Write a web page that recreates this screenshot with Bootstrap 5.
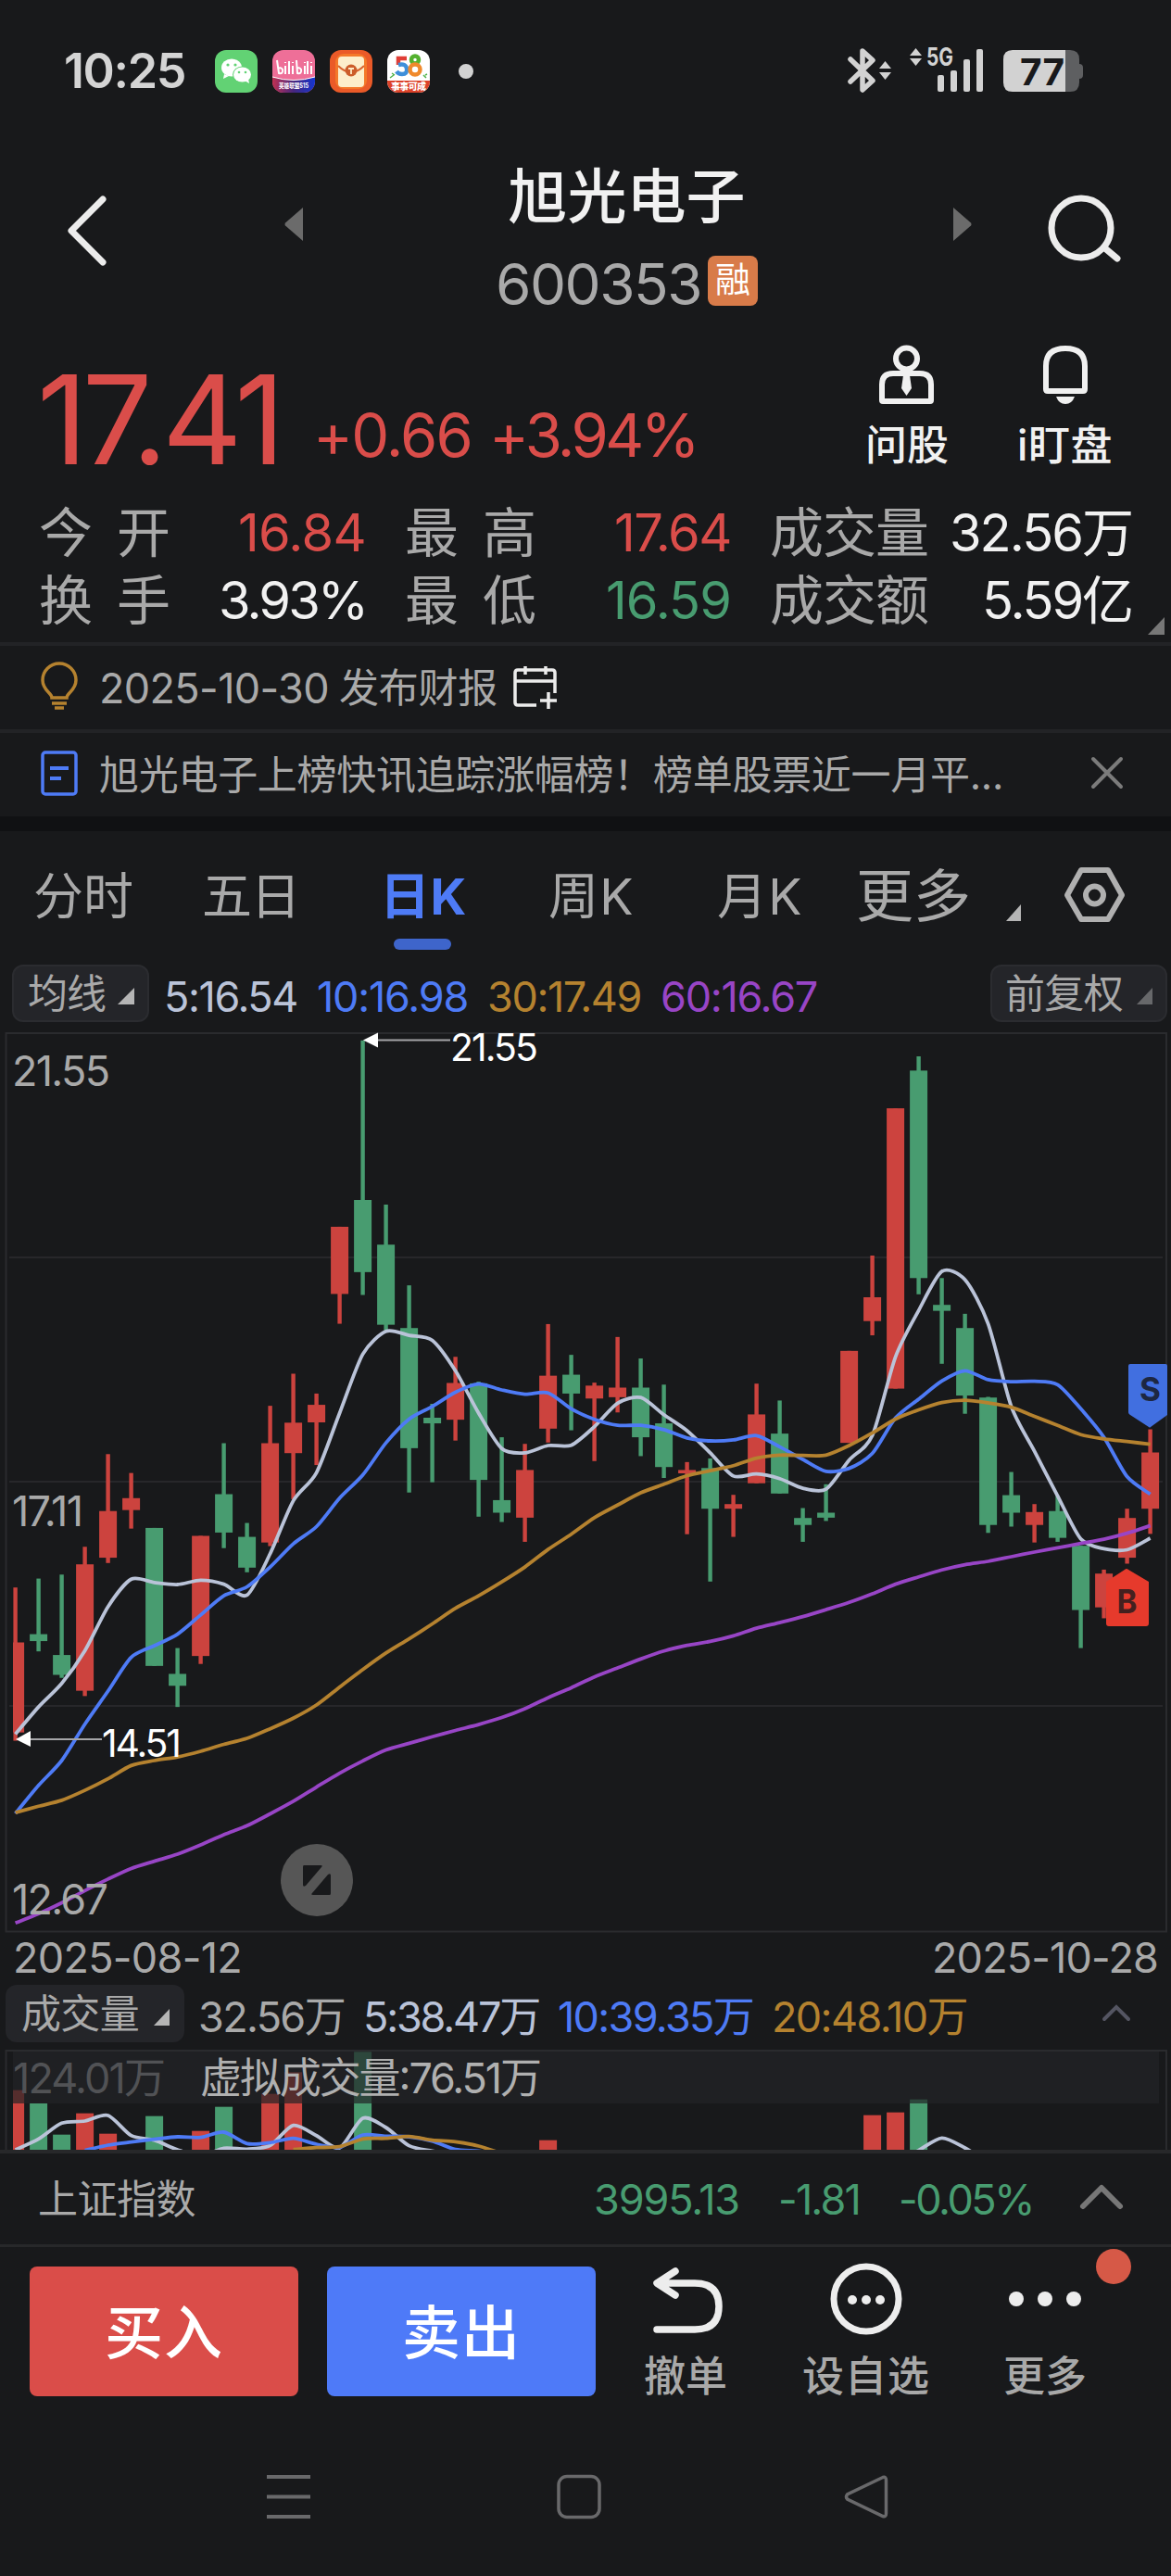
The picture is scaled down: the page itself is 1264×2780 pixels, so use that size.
<!DOCTYPE html>
<html lang="zh-CN" data-bs-theme="dark">
<head>
<meta charset="utf-8">
<meta name="viewport" content="width=device-width, initial-scale=1">
<title>旭光电子 600353</title>
<link href="https://cdn.jsdelivr.net/npm/bootstrap@5.3.0/dist/css/bootstrap.min.css" rel="stylesheet">
<style>
:root{--up:#da4d4a;--down:#489c70;--blue:#4e7bf6;--bar-up:#cc433e;--gold:#b5822f;--violet:#9845c6;--silver:#bac3d8;--dim:#a9a9a9;--bright:#f1f1f1;--edge:#27282b;--pill:#242529}
html,body{background:#18191b}
body{margin:0;font-family:Inter,"Noto Sans CJK SC",sans-serif;color:var(--dim);line-height:1;overflow:hidden}
.screen{width:1264px;height:2780px;overflow:hidden}
.screen span,.screen a{white-space:nowrap}
svg{display:block;flex:none;overflow:visible}
.c-up{color:var(--up)}.c-down{color:var(--down)}.c-blue{color:var(--blue)}.c-gold{color:var(--gold)}.c-violet{color:var(--violet)}.c-silver{color:var(--silver)}.c-bright{color:var(--bright)}
.light{font-weight:400}
.statusbar{height:154px;padding-left:69px}
.statusbar .clock{font-size:52px;font-weight:600;color:#d4d4d4;width:163px}
.statusbar .apps{gap:16px}
.radios{margin-right:96px}
.top{height:198px;display:grid;grid-template-columns:304px 752px 208px}
.stock-name{font-size:64px;font-weight:500;color:var(--bright);height:70px;line-height:70px;margin-top:23px}
.stock-code{font-size:62px;height:58px;line-height:62px;margin-top:29px}
.rz{width:54px;height:54px;border-radius:8px;background:#d87b49;color:#fff;font-size:38px;line-height:50px;text-align:center;margin-left:7px}
.quote{height:174px;padding-left:40px}
.price{font-size:134px;font-weight:400;width:298px;height:100px;line-height:100px;margin-top:50px}
.delta{font-size:65px;height:60px;line-height:60px;margin-top:88px;gap:19px;width:421px}
.qa{font-size:45px;font-weight:500;color:var(--bright);margin-top:20px}
.qa svg{margin-bottom:20px}
.stats{height:167px;padding:12px 42px 0;display:grid;grid-template-columns:353px 352px 391px;column-gap:42px;grid-auto-rows:73px;font-size:56px}
.stats .lbl{font-size:58px;letter-spacing:-1px}
.stats .wide{letter-spacing:26px}
.notice{height:94px;border-top:4px solid #222326;padding-left:42px;font-size:43px}
.gapbar{height:16px;background:#101113}
.tabs{height:144px;display:grid;grid-template-columns:36px 182px 192px 182px 182px 150px 161px 63px auto;font-size:54px;line-height:141px}
.tabs a{color:var(--dim);text-decoration:none}
.tabs .on{color:var(--blue);font-weight:700;position:relative}
.tabs .on::after{content:"";position:absolute;left:15px;top:116px;width:62px;height:12px;border-radius:6px;background:#3e65cb}
.pillbox{background:var(--pill);border:2px solid #2b2c30;border-radius:12px;height:62px;font-size:43px;line-height:46px}
.ma{height:74px;font-size:45px}
.chart{height:971px}
.dates{height:56px;padding:0 14px 4px;font-size:45px}
.volhead{height:70px;font-size:45px}
.volume{height:108px;overflow:hidden}
.index{height:102px;border-top:4px solid #27282a;font-size:45px}
.actions{height:196px;border-top:3px solid #27282a;padding-left:32px}
.trade{width:290px;height:140px;border-radius:8px;margin-top:21px;font-size:63px;font-weight:500;color:#fff;line-height:142px;padding:0;border:0}
.buy,.buy:hover{background:#da4d49}.sell,.sell:hover{background:#4e7af8}
.act{font-size:45px;font-weight:500}
.act svg{margin-bottom:20px}
.sysnav{padding-left:284px;margin-top:48px}
svg text{font-family:Inter,"Noto Sans CJK SC",sans-serif}
</style>
<script src="https://cdn.jsdelivr.net/npm/bootstrap@5.3.0/dist/js/bootstrap.bundle.min.js"></script>
</head>
<body>
<main class="screen d-flex flex-column">

<!-- system status bar -->
<div class="statusbar d-flex align-items-center">
  <span class="clock"><span data-w="131">10:25</span></span>
  <div class="apps d-flex">
    <svg width="46" height="46"><rect width="46" height="46" rx="12" fill="#62d274"/><ellipse cx="18" cy="19" rx="11" ry="9.5" fill="#fff"/><path d="M10 26l-1 5 6-3z" fill="#fff"/><ellipse cx="29.500" cy="26.500" rx="10.500" ry="9" fill="#62d274"/><ellipse cx="29.500" cy="26.500" rx="9.500" ry="8" fill="#fff"/><path d="M32 33l5 3-1-5z" fill="#fff"/><g fill="#62d274"><circle cx="14" cy="16" r="1.600"/><circle cx="22" cy="16" r="1.600"/><circle cx="26" cy="24" r="1.300"/><circle cx="33" cy="24" r="1.300"/></g></svg>
    <svg width="46" height="46"><defs><clipPath id="r1"><rect width="46" height="46" rx="12"/></clipPath><linearGradient id="g1"><stop stop-color="#c03052"/><stop offset=".5" stop-color="#46277f"/><stop offset="1" stop-color="#1435cf"/></linearGradient></defs><g clip-path="url(#r1)"><rect width="46" height="46" fill="#ee6f98"/><path d="M0 29Q23 36 46 29V46H0Z" fill="url(#g1)"/><path d="M0 29Q23 36 46 29" fill="none" stroke="#fff"/><g fill="none" stroke="#fff" stroke-width="2"><path d="M5 11l2 14q5 1 4-4-2-3-5-1M14 17v9M18 12v14M22 17v9M26 11l1 14q5 1 4-4-2-3-5-1M35 17v9M38 12v14M42 17v9M14 13v1M22 13v1M35 13v1M42 13v1"/></g><text x="7" y="41" font-size="7" font-weight="700" fill="#fff" textLength="32" lengthAdjust="spacingAndGlyphs">英雄联盟S15</text></g></svg>
    <svg width="46" height="46"><rect width="46" height="46" rx="12" fill="#ea5a28"/><rect x="6" y="4" width="34" height="38" rx="9" fill="#f4782a"/><rect x="9" y="7" width="28" height="33" rx="4" fill="#fdeecb"/><path d="M9 17Q16 24 23 24T37 17" fill="none" stroke="#d9642f" stroke-width="2"/><circle cx="23" cy="22" r="6.500" fill="#cc5d2a"/><path d="M20 20h6M23 20v6" stroke="#ffe9c4" stroke-width="1.800"/></svg>
    <svg width="46" height="46"><defs><clipPath id="r2"><rect width="46" height="46" rx="12"/></clipPath></defs><g clip-path="url(#r2)"><rect width="46" height="46" fill="#fff"/><path d="M0 33H46V46H0Z" fill="#dc4229"/><g fill="none" stroke-width="4.500"><path d="M21 9H12V16" stroke="#e03e36"/><path d="M12 16q8-2 9 4t-5 6q-4 0-6-3" stroke="#3e8fda"/><circle cx="30" cy="10.500" r="4" stroke="#54b12f"/><circle cx="30" cy="21" r="5.500" stroke="#f08a2c"/></g><path d="M3 30l4-3M5 25l3 2M42 30l-3-3M43 26l-2 1" stroke="#52b44b" stroke-width="1.500"/><text x="4" y="43" font-size="10" font-weight="800" fill="#fff" textLength="38">事事可成</text></g></svg>
    <svg width="40" height="46"><circle cx="23" cy="23" r="8" fill="#d2d2d2"/></svg>
  </div>
  <svg class="radios ms-auto" width="262" height="70" viewBox="906 42 262 70">
    <g fill="none" stroke="#d2d2d2" stroke-width="5.500" stroke-linecap="round" stroke-linejoin="round"><path d="M918 64L942 87 931 97V55L942 65 918 88"/></g>
    <g fill="#d2d2d2"><path d="M949 74l6.500-8 6.500 8zM949 78h13l-6.500 8zM982 60l6.500-8 6.500 8zM982 63h13l-6.500 8z"/>
    <rect x="1012" y="81" width="7" height="18" rx="2"/><rect x="1026" y="76" width="7" height="23" rx="2"/><rect x="1040" y="64" width="7" height="35" rx="2"/><rect x="1054" y="53" width="7" height="46" rx="2"/>
    <text x="1000" y="71" font-size="27" font-weight="700" textLength="29" lengthAdjust="spacingAndGlyphs">5G</text></g>
    <path d="M1093 54h57v45h-57q-10 0-10-10V64q0-10 10-10z" fill="#d2d2d2"/><path d="M1150 54h5q10 0 10 10v5q4 0 4 4v8q0 4-4 4v4q0 10-10 10h-5z" fill="#5e5f61"/>
    <text x="1101" y="91.500" font-size="40" font-weight="700" fill="#18191b" textLength="48" lengthAdjust="spacingAndGlyphs">77</text>
  </svg>
</div>

<!-- stock title -->
<header class="top">
  <div class="d-flex"><svg width="60" height="86" style="margin:52px 0 0 66px" viewBox="66 206 60 86"><path d="M111 215L77 249l34 34" fill="none" stroke="#ececec" stroke-width="7" stroke-linecap="round" stroke-linejoin="round"/></svg></div>
  <div class="d-flex justify-content-between">
    <svg width="24" height="40" style="margin-top:69px"><path d="M23 1v36L4 20.500q-1-1 0-3z" fill="#6b6b6b"/></svg>
    <div class="d-flex flex-column align-items-center" style="margin-left:21px">
      <span class="stock-name"><span data-w="256">旭光电子</span></span>
      <div class="d-flex stock-code"><span data-w="222" class="light">600353</span><span class="rz">融</span></div>
    </div>
    <svg width="52" height="40" style="margin-top:69px"><path d="M25 1v36L44 20.500q1-1 0-3z" fill="#6b6b6b"/></svg>
  </div>
  <div class="d-flex justify-content-end"><svg width="90" height="90" style="margin:50px 48px 0 0" viewBox="1125 205 90 90"><circle cx="1166" cy="247" r="32" fill="none" stroke="#ececec" stroke-width="7"/><path d="M1193 270l12 10" stroke="#ececec" stroke-width="7" stroke-linecap="round"/></svg></div>
</header>

<!-- price -->
<section class="quote d-flex">
  <span class="price c-up"><span data-w="262">17.41</span></span>
  <div class="delta c-up light d-flex"><span data-w="171">+0.66</span><span data-w="224">+3.94%</span></div>
  <div class="qa d-flex flex-column align-items-center" style="margin-left:175px">
    <svg width="64" height="66" viewBox="948 371 64 66"><g fill="none" stroke="#f0f0f0" stroke-width="6"><circle cx="979.500" cy="386" r="11.500"/><path d="M953 431v-17q0-12 12-12h29q12 0 12 12v17q0 1-1 1h-51q-1 0-1-1z"/></g><path d="M976 404h7l2 14-5.500 8-5.500-8z" fill="#f0f0f0"/></svg>
    <span data-w="90">问股</span>
  </div>
  <div class="qa d-flex flex-column align-items-center" style="margin-left:74px">
    <svg width="54" height="66" viewBox="1123 371 54 66"><path d="M1129 419V394q0-19 21-19t21 19v25q0 2-2 2h-38q-2 0-2-2z" fill="none" stroke="#f0f0f0" stroke-width="6"/><path d="M1140 427h20q-3 8-10 8t-10-8z" fill="#f0f0f0"/></svg>
    <span data-w="103">i盯盘</span>
  </div>
</section>

<section class="stats">
  <div class="d-flex align-items-center justify-content-between"><span class="lbl light wide">今开</span><span class="c-up light" data-w="138">16.84</span></div>
  <div class="d-flex align-items-center justify-content-between"><span class="lbl light wide">最高</span><span class="c-up light" data-w="126">17.64</span></div>
  <div class="d-flex align-items-center justify-content-between"><span class="lbl light">成交量</span><span class="c-bright" data-w="197">32.56万</span></div>
  <div class="d-flex align-items-center justify-content-between"><span class="lbl light wide">换手</span><span class="c-bright" data-w="159">3.93%</span></div>
  <div class="d-flex align-items-center justify-content-between"><span class="lbl light wide">最低</span><span class="c-down light" data-w="135">16.59</span></div>
  <div class="d-flex align-items-center justify-content-between position-relative"><span class="lbl light">成交额</span><span class="c-bright" data-w="162">5.59亿</span>
    <svg class="position-absolute" style="right:-36px;bottom:-2px" width="20" height="20"><path d="M19 0v19H1z" fill="#777"/></svg></div>
</section>

<!-- notices -->
<div class="notice d-flex align-items-center">
  <svg width="65" height="56" viewBox="0 0 65 56"><g fill="none" stroke="#b5822f" stroke-width="3.500"><path d="M14 39C14 34 4 31 4 20a18 18 0 0 1 36 0c0 11-10 14-10 19z"/><path d="M14 45h16" /><path d="M17 50h10"/></g></svg>
  <span data-w="248" class="light" style="font-size:45px">2025-10-30</span><span data-w="171" style="margin-left:11px" class="light">发布财报</span>
  <svg class="ms-3" width="52" height="52" viewBox="552 714 52 52"><g fill="none" stroke="#ececec" stroke-width="3.500"><path d="M598 746v-22q0-3-3-3h-37q-3 0-3 3v32q0 3 3 3h20M555 733h43M566 717v9M588 717v9M591 745v18M582 754h18"/></g></svg>
</div>
<div class="notice d-flex align-items-center">
  <svg width="65" height="56" viewBox="0 0 65 56"><g fill="none" stroke="#4e7bf6" stroke-width="3.500"><rect x="4" y="4" width="36" height="45" rx="3"/><path d="M12 21h20M12 32h12" stroke-width="4"/></g></svg>
  <span data-w="976" class="light">旭光电子上榜快讯追踪涨幅榜！榜单股票近一月平...</span>
  <svg class="ms-auto" style="margin:-4px 49px 0 0" width="40" height="40"><path d="M5 5l30 30M35 5L5 35" stroke="#7b7b7b" stroke-width="4" stroke-linecap="round"/></svg>
</div>
<div class="gapbar"></div>

<!-- period tabs -->
<nav class="tabs">
  <span></span><a class="light" href="#"><span data-w="108">分时</span></a><a class="light" href="#"><span data-w="105">五日</span></a><a class="on" href="#"><span data-w="94">日K</span></a><a class="light" href="#"><span data-w="93">周K</span></a><a class="light" href="#"><span data-w="93">月K</span></a>
  <a href="#" style="font-size:62px"><span data-w="124">更多</span></a>
  <svg width="20" height="20" style="margin-top:79px"><path d="M17 0v18H1z" fill="#b5b5b5"/></svg>
  <svg width="68" height="66" style="margin-top:35px" viewBox="1147 931 68 66"><g fill="none" stroke="#b0b0b0" stroke-width="6"><path d="M1166 938h29l15 27-15 26h-29l-15-26z" stroke-linejoin="round"/><circle cx="1180.500" cy="965" r="9.500"/></g></svg>
</nav>

<!-- moving averages -->
<div class="ma d-flex">
  <div class="pillbox d-flex align-items-center" style="width:148px;margin:0 16px 0 13px;padding-left:15px"><span data-w="84">均线</span><svg width="20" height="20" style="margin:8px 0 0 13px"><path d="M18 0v18H0z" fill="#b5b5b5"/></svg></div>
  <div class="d-flex align-items-center light" style="height:69px;gap:21px"><span class="c-silver" data-w="144">5:16.54</span><span class="c-blue" data-w="163">10:16.98</span><span class="c-gold" data-w="166">30:17.49</span><span class="c-violet" data-w="169">60:16.67</span></div>
  <div class="pillbox d-flex align-items-center ms-auto" style="width:191px;margin-right:4px;padding-left:14px"><span data-w="127">前复权</span><svg width="20" height="20" style="margin:8px 0 0 15px"><path d="M17 0v18H0z" fill="#67686a"/></svg></div>
</div>

<!-- candles -->
<svg class="chart" width="1264" height="971" id="kline">
  <path d="M6.500 0V969.500H1259V0Z" fill="none" stroke="#2a2b2e" stroke-width="2"/>
  <path d="M10 242H1255M10 484H1255M10 726H1255" stroke="#2d2d30" stroke-width="1.500"/>
  <g id="candles"></g>
  <g id="averages"></g>
  <g font-size="45" fill="#a9a9a9"><text x="13" y="57" textLength="106">21.55</text><text x="13" y="532" textLength="77">17.11</text><text x="13" y="951" textLength="104">12.67</text></g>
  <g fill="#fff"><path d="M392 7.500l16-8v16zM17 762l16-9v17z"/><text x="486" y="30" font-size="41" textLength="95">21.55</text><text x="110" y="781" font-size="41" textLength="86">14.51</text></g>
  <path d="M408 7.500h78M33 762h77" stroke="#a5a5a8" stroke-width="2"/>
  <path d="M1220 357h38q2 0 2 2v53l-18 13q-1 1-2 0l-20-13q-2-1-2-3v-50q0-2 2-2z" fill="#416fe0"/><text x="1241.500" y="397" font-size="35" font-weight="700" text-anchor="middle" fill="#1d2742">S</text>
  <path d="M1197 640q-3 0-3-3v-45l20-13q2-2 4 0l22 13v45q0 3-3 3z" fill="#e63a2c"/><text x="1216.500" y="626" font-size="36" font-weight="700" text-anchor="middle" textLength="22" lengthAdjust="spacingAndGlyphs" fill="#44201f">B</text>
  <circle cx="342" cy="914" r="39" fill="#565656"/><path d="M328 898h18q3 0 1 2l-17 20q-3 2-3-1v-19q0-2 1-2zM356 930h-18q-3 0-1-2l17-20q3-2 3 1v19q0 2-1 2z" fill="#18191b"/>
</svg>
<div class="dates d-flex justify-content-between align-items-center light"><span data-w="247">2025-08-12</span><span data-w="244">2025-10-28</span></div>

<!-- volume -->
<div class="volhead d-flex">
  <div class="pillbox d-flex align-items-center border-0" style="width:193px;margin:0 15px 0 6px;padding-left:17px"><span data-w="127">成交量</span><svg width="20" height="20" style="margin:10px 0 0 16px"><path d="M17 0v18H0z" fill="#b5b5b5"/></svg></div>
  <div class="d-flex align-items-center light" style="height:69px;gap:20px"><span data-w="158">32.56万</span><span class="c-silver" data-w="190">5:38.47万</span><span class="c-blue" data-w="211">10:39.35万</span><span class="c-gold" data-w="211">20:48.10万</span></div>
  <svg class="ms-auto" width="36" height="24" style="margin:19px 41px 0 0"><path d="M5 18L18 5l13 13" fill="none" stroke="#545562" stroke-width="4" stroke-linecap="round"/></svg>
</div>
<svg class="volume" width="1264" height="108" id="vol">
  <path d="M6.500 109V1H1259V109" fill="none" stroke="#2a2b2e" stroke-width="2"/>
  <g id="vbars"></g>
  <rect x="14" y="2" width="1237" height="56" fill="#222327" fill-opacity=".7"/>
  <g id="vlines"></g>
  <g font-size="45"><text x="14" y="47" fill="#515255" textLength="165">124.01万</text><text x="216" y="47" fill="#b0b0b0" textLength="369">虚拟成交量:76.51万</text></g>
</svg>

<div class="index d-flex align-items-center">
  <span data-w="170" class="light" style="margin-left:41px;font-size:43px">上证指数</span>
  <div class="d-flex c-down light" style="margin-left:430px;gap:42px"><span data-w="157">3995.13</span><span data-w="88">-1.81</span><span data-w="145">-0.05%</span></div>
  <svg class="ms-auto" width="52" height="34" style="margin:-4px 49px 0 0"><path d="M6 27L26 7l20 20" fill="none" stroke="#777" stroke-width="6" stroke-linecap="round" stroke-linejoin="round"/></svg>
</div>

<!-- trading bar -->
<div class="actions d-flex">
  <button class="btn trade buy"><span data-w="128">买入</span></button><button class="btn trade sell" style="margin-left:31px"><span data-w="128">卖出</span></button>
  <div class="act d-flex flex-column align-items-center" style="margin:19px 0 0 52px"><svg width="84" height="78" viewBox="697 2442 84 78"><path d="M728 2449l-20 13 20 13M710 2462h39q26 0 26 25t-26 25H708" fill="none" stroke="#ededed" stroke-width="7.500" stroke-linecap="round" stroke-linejoin="round"/></svg><span data-w="90">撤单</span></div>
  <div class="act d-flex flex-column align-items-center" style="margin:16px 0 0 81px"><svg width="80" height="81" viewBox="893 2440 80 81"><circle cx="933" cy="2480" r="35" fill="none" stroke="#ededed" stroke-width="7"/><g fill="#ededed"><circle cx="918" cy="2481" r="5"/><circle cx="933" cy="2481" r="5"/><circle cx="948" cy="2481" r="5"/></g></svg><span data-w="138">设自选</span></div>
  <div class="act d-flex flex-column align-items-center position-relative" style="margin:16px 0 0 79px"><svg width="90" height="81" viewBox="1082 2440 90 81"><g fill="#ededed"><circle cx="1096" cy="2480" r="8"/><circle cx="1127" cy="2480" r="8"/><circle cx="1158" cy="2480" r="8"/></g></svg><span data-w="90">更多</span>
    <svg class="position-absolute" style="left:99px;top:-15px" width="40" height="40"><circle cx="20" cy="20" r="19" fill="#d65947"/></svg></div>
</div>

<!-- system navigation -->
<div class="sysnav"><svg width="680" height="56" viewBox="284 2666 680 56"><g fill="none" stroke="#69696b"><path d="M288 2673h47M288 2694.500h47M288 2716h47" stroke-width="4"/><rect x="603" y="2672.500" width="44" height="44" rx="9" stroke-width="3.500"/><path d="M953 2673.500L914.500 2692q-2 2.500 0 5L953 2715.500q3.500 1 3.500-3v-36q0-4-3.500-3z" stroke-width="3.500"/></g></svg></div>
</main>

<script>
const R='var(--bar-up)',G='var(--down)';
const X=i=>16.6+25*i;
// candle: [rising, high, body top, body bottom, low]
const K=[[1,1717,1883,2155,2180],[0,1690,1858,1879,1910],[0,1678,1921,1981,1990],[1,1594,1647,2029,2045],[1,1314,1486,1627,1643],[1,1371,1447,1483,1539],[0,1537,1537,1954,1954],[0,1900,1978,2014,2078],[1,1561,1561,1924,1948],[0,1281,1435,1551,1598],[0,1522,1564,1657,1671],[1,1168,1281,1581,1592],[1,1071,1219,1311,1450],[1,1131,1165,1218,1347],[1,627,627,830,920],[0,64,546,764,833],[0,560,681,923,940],[0,804,933,1296,1430],[0,1162,1204,1221,1399],[1,1020,1099,1210,1273],[0,1095,1100,1392,1503],[0,1263,1453,1491,1519],[1,1283,1362,1506,1579],[1,921,1077,1237,1279],[0,1014,1074,1131,1242],[1,1098,1107,1146,1335],[1,960,1113,1142,1188],[0,1025,1113,1263,1320],[0,1104,1221,1353,1386],[1,1338,1362,1372,1556],[0,1327,1356,1479,1699],[1,1437,1465,1479,1564],[1,1101,1194,1402,1402],[0,1152,1252,1433,1433],[0,1477,1507,1528,1579],[0,1405,1491,1506,1516],[1,1002,1002,1280,1280],[1,714,840,912,955],[1,269,269,1116,1116],[0,112,155,782,831],[0,782,863,881,1041],[0,890,933,1137,1192],[0,1141,1143,1528,1552],[0,1368,1438,1491,1533],[1,1465,1489,1528,1581],[0,1440,1486,1567,1579],[0,1591,1591,1785,1900],[1,1663,1675,1777,1810],[1,1479,1507,1627,1645],[1,1239,1309,1479,1555]];
const MA=[
['var(--silver)',[2160,2078,2007,1908,1775,1692,1702,1708,1695,1707,1740,1615,1455,1370,1190,1012,943,955,970,1062,1190,1297,1310,1288,1287,1231,1160,1143,1195,1243,1310,1380,1374,1388,1417,1420,1332,1258,1020,880,762,787,920,1170,1305,1440,1570,1600,1603,1568]],
['var(--blue)',[2400,2315,2240,2130,2030,1928,1893,1858,1800,1742,1715,1655,1585,1533,1447,1377,1280,1208,1170,1127,1102,1120,1133,1129,1177,1209,1227,1227,1240,1265,1274,1271,1258,1292,1330,1366,1357,1312,1205,1148,1093,1062,1089,1095,1094,1104,1177,1263,1382,1435]],
['var(--gold)',[2397,2378,2360,2330,2295,2255,2240,2229,2212,2191,2173,2144,2112,2072,2018,1965,1915,1872,1827,1780,1742,1700,1655,1602,1556,1506,1468,1431,1405,1379,1364,1349,1326,1317,1318,1317,1288,1250,1208,1180,1158,1151,1159,1172,1200,1227,1255,1268,1276,1284]],
['var(--violet)',[2731,2703,2670,2633,2598,2566,2544,2523,2495,2464,2437,2401,2363,2320,2278,2241,2208,2188,2168,2149,2131,2110,2083,2050,2020,1987,1960,1933,1909,1892,1880,1863,1840,1823,1805,1784,1762,1736,1707,1685,1664,1648,1638,1624,1610,1597,1584,1571,1553,1530]]];
const Y=v=>(v-42)/2.8;
// smooth line through consecutive points
function curve(p){let d='M'+p[0];for(let i=0;i<p.length-1;i++){const a=p[i-1]||p[i],b=p[i],c=p[i+1],e=p[i+2]||c,t=.13;
  d+=`C${b[0]+(c[0]-a[0])*t},${b[1]+(c[1]-a[1])*t} ${c[0]-(e[0]-b[0])*t},${c[1]-(e[1]-b[1])*t} ${c}`}return d}
const stroke=(p,c)=>`<path d="${curve(p)}" fill="none" stroke="${c}" stroke-width="3.8"/>`;
document.getElementById('candles').innerHTML=K.map(([u,h,t,b,l],i)=>{const x=X(i),f=u?R:G,x0=i?x-9.5:14;
  return `<rect x="${x-2.2}" y="${Y(h)}" width="4.4" height="${Y(l)-Y(h)}" fill="${f}"/><rect x="${x0}" y="${Y(t)}" width="${x+9.5-x0}" height="${Y(b)-Y(t)}" fill="${f}"/>`}).join('');
document.getElementById('averages').innerHTML=MA.map(([c,a])=>stroke(a.map((v,i)=>[X(i),Y(v)]),c)).join('');
const V={0:[1,525],1:[0,568],2:[0,669],3:[1,600],4:[1,666],6:[0,609],8:[1,657],9:[0,579],11:[1,537],12:[1,467],15:[0,401],23:[1,687],37:[1,606],38:[1,597],39:[0,555]};
const W=v=>(v-397)/3+1;
document.getElementById('vbars').innerHTML=Object.entries(V).map(([i,[u,t]])=>{const x=X(+i),x0=+i?x-9.5:14;
  return `<rect x="${x0}" y="${W(t)}" width="${x+9.5-x0}" height="${109-W(t)}" fill="${u?R:G}"/>`}).join('');
document.getElementById('vlines').innerHTML=[
['var(--silver)',0,[718,683,632,625,607,672,687,718,738,713,716,704,639,672,712,616,646,705,722,735]],
['var(--blue)',3,[720,703,693,684,676,678,661,698,695,681,700,710,670,674,676,690,717,722,735]],
['var(--gold)',12,[717,711,708,683,681,675,687,692,706,730]],
['var(--silver)',38,[760,720,680,712,760]]
].map(([c,s,a])=>stroke(a.map((v,i)=>[X(s+i),W(v)]),c)).join('');
document.querySelectorAll('[data-w]').forEach(e=>{e.style.display='inline-block';
  const n=e.textContent.length,w=e.getBoundingClientRect().width;
  e.style.letterSpacing=(e.dataset.w-w)/n+'px';
});
</script>
</body>
</html>
